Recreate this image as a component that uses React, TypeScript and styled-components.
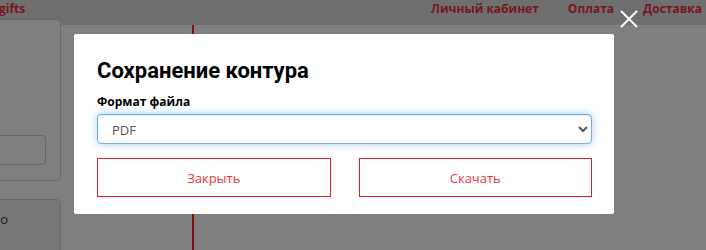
import React from "react";
import styled, { createGlobalStyle } from "styled-components";

const GlobalStyle = createGlobalStyle`
  * { box-sizing: border-box; }
  html, body { margin: 0; padding: 0; background: #fff; }
  body {
    font-family: "Open Sans", "Liberation Sans", sans-serif;
    font-size: 13px;
    color: #333;
    overflow: hidden;
  }
`;

const navItems = ["Личный кабинет", "Оплата", "Доставка"];

export default function App() {
  return (
    <>
      <GlobalStyle />
      <Page>
        <Header>
          <Logo>gifts</Logo>
          <Nav>
            {navItems.map((item) => (
              <NavLink key={item}>{item}</NavLink>
            ))}
          </Nav>
        </Header>
        <Body>
          <Sidebar>
            <Card>
              <CardInput />
            </Card>
            <Card filled>
              <CardText>о</CardText>
            </Card>
          </Sidebar>
          <Canvas>
            <Guide />
          </Canvas>
        </Body>
      </Page>

      <Overlay>
        <CloseButton aria-label="close">
          <svg width="18" height="18" viewBox="0 0 18 18">
            <path d="M1 1 L17 17 M17 1 L1 17" stroke="#fff" strokeWidth="2" />
          </svg>
        </CloseButton>
        <Modal>
          <Title>Сохранение контура</Title>
          <Label>Формат файла</Label>
          <Select focused defaultValue="pdf">
            <option value="pdf">PDF</option>
            <option value="svg">SVG</option>
            <option value="dxf">DXF</option>
          </Select>
          <Actions>
            <OutlineButton>Закрыть</OutlineButton>
            <OutlineButton>Скачать</OutlineButton>
          </Actions>
        </Modal>
      </Overlay>
    </>
  );
}

const Page = styled.div`
  width: 706px;
  height: 250px;
  display: flex;
  flex-direction: column;
`;

const Header = styled.header`
  height: 25px;
  flex: none;
  background: #dedede;
  display: flex;
  justify-content: space-between;
  padding: 0 4px 0 0;
`;

const Logo = styled.div`
  font-weight: 700;
  font-size: 12px;
  line-height: 18px;
  color: #ee2d3f;
  margin-left: -1px;
`;

const Nav = styled.nav`
  display: flex;
  gap: 29px;
`;

const NavLink = styled.a`
  font-weight: 700;
  font-size: 12px;
  line-height: 18px;
  color: #ee2d3f;
  cursor: pointer;
`;

const Body = styled.div`
  flex: 1;
  display: flex;
  min-height: 0;
`;

const Sidebar = styled.aside`
  width: 61px;
  flex: none;
  overflow: hidden;
  display: flex;
  flex-direction: column;
  align-items: flex-end;
  gap: 18px;
  margin-top: -6px;
`;

const Card = styled.div<{ filled?: boolean }>`
  width: 260px;
  flex: none;
  height: ${({ filled }) => (filled ? "80px" : "162px")};
  border: 1px solid #d3d3d3;
  border-radius: 5px;
  background: ${({ filled }) => (filled ? "#eeeeee" : "#fff")};
  display: flex;
  flex-direction: column;
  align-items: flex-end;
  padding: ${({ filled }) => (filled ? "10px 52px 0 0" : "0 14px 15px 0")};
  justify-content: ${({ filled }) => (filled ? "flex-start" : "flex-end")};
`;

const CardInput = styled.div`
  width: 220px;
  height: 30px;
  border: 1px solid #ccc;
  border-radius: 4px;
  background: #fff;
`;

const CardText = styled.span`
  font-size: 13px;
  color: #333;
  line-height: 18px;
`;

const Canvas = styled.div`
  flex: 1;
  position: relative;
`;

const Guide = styled.div`
  position: absolute;
  top: 0;
  bottom: 0;
  left: 131px;
  width: 2px;
  background: #ff2020;
`;

const Overlay = styled.div`
  position: fixed;
  inset: 0;
  background: rgba(0, 0, 0, 0.5);
  padding: 34px 0 0 74px;
`;

const CloseButton = styled.button`
  position: absolute;
  top: 10px;
  left: 620px;
  width: 18px;
  height: 18px;
  padding: 0;
  border: 0;
  background: none;
  display: flex;
  cursor: pointer;
`;

const Modal = styled.div`
  width: 540px;
  height: 180px;
  background: #fff;
  border-radius: 2px;
  padding: 22px 22px 0 23px;
  display: flex;
  flex-direction: column;
`;

const Title = styled.h2`
  margin: 0;
  font-family: Roboto, "Liberation Sans", sans-serif;
  font-weight: 700;
  font-size: 22px;
  line-height: 30px;
  color: #000;
`;

const Label = styled.label`
  margin-top: 7px;
  font-weight: 700;
  font-size: 12px;
  line-height: 17px;
  color: #000;
`;

const Select = styled.select<{ focused?: boolean }>`
  margin-top: 4px;
  width: 495px;
  height: 30px;
  padding: 5px 10px;
  font-family: "Open Sans", "Liberation Sans", sans-serif;
  font-size: 13px;
  color: #555;
  background: #fff;
  border: 1px solid ${({ focused }) => (focused ? "#66afe9" : "#ccc")};
  border-radius: 4px;
  outline: none;
  box-shadow: ${({ focused }) =>
    focused
      ? "inset 0 1px 1px rgba(0,0,0,.075), 0 0 8px rgba(102,175,233,.6)"
      : "inset 0 1px 1px rgba(0,0,0,.075)"};
`;

const Actions = styled.div`
  margin-top: 14px;
  display: flex;
  gap: 28px;
`;

const OutlineButton = styled.button`
  width: 234px;
  height: 39px;
  background: #fff;
  border: 1px solid #e31e24;
  border-radius: 0;
  font-family: "Open Sans", "Liberation Sans", sans-serif;
  font-size: 13px;
  color: #e4353d;
  cursor: pointer;
`;
